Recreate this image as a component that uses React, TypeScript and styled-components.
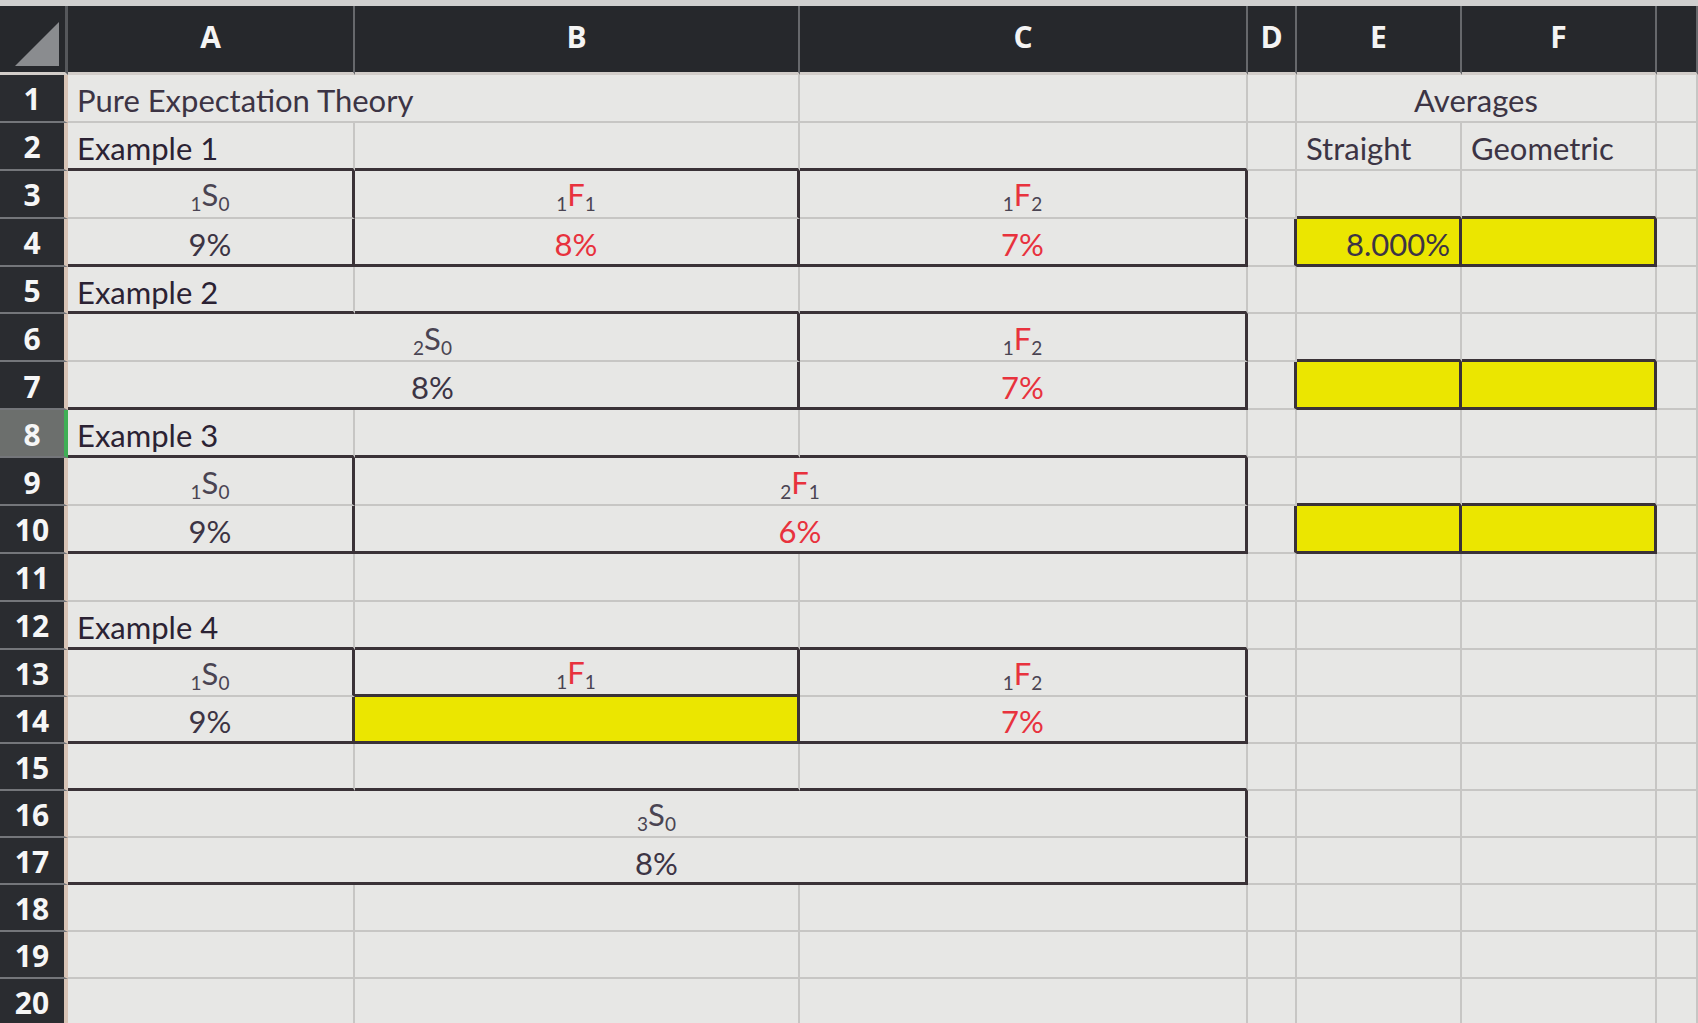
import React from "react";
import styled, { createGlobalStyle } from "styled-components";

type Align = "left" | "center" | "right";

interface CellDef {
  r: number;
  c: number;
  span?: number;
  align?: Align;
  fill?: boolean;
  red?: boolean;
  label?: boolean;
  content?: React.ReactNode;
}

const COL_WIDTHS = [287, 445, 448, 49, 165, 195];
const LETTERS = ["A", "B", "C", "D", "E", "F", ""];
const ROW_COUNT = 20;
const SELECTED_ROW = 8;

const GlobalStyle = createGlobalStyle`
  html, body {
    margin: 0;
    padding: 0;
    background: #e7e7e5;
    overflow: hidden;
  }
  body {
    font-family: Lato, "Open Sans", "Liberation Sans", sans-serif;
  }
`;

const Sheet = styled.div`
  display: grid;
  grid-template-columns: 68px ${COL_WIDTHS.map((w) => `${w}px`).join(" ")} 1fr;
  grid-template-rows: 69px repeat(12, 47.9px) repeat(8, 47.1px);
  width: 1698px;
  height: 1023px;
  overflow: hidden;
  border-top: 6px solid #cfcfcf;
  box-sizing: border-box;
  background: #e7e7e5;
`;

const Corner = styled.div`
  grid-row: 1;
  grid-column: 1;
  background: #26282c;
  border-bottom: 3px solid #d2cdc9;
  border-right: 3px solid #55575b;
  box-sizing: border-box;
  display: flex;
  align-items: flex-end;
  justify-content: flex-end;
  padding: 0 6px 6px 0;
`;

const ColHead = styled.div<{ $col: number }>`
  grid-row: 1;
  grid-column: ${({ $col }) => $col + 1};
  background: #26282c;
  color: #f4f4f4;
  font-family: "Open Sans", Lato, sans-serif;
  font-weight: 700;
  font-size: 30px;
  display: flex;
  align-items: center;
  justify-content: center;
  box-sizing: border-box;
  border-right: 2px solid #66686c;
  border-bottom: 3px solid #d2cdc9;
  padding-bottom: 6px;
`;

const RowHead = styled.div<{ $row: number; $selected: boolean }>`
  grid-row: ${({ $row }) => $row + 1};
  grid-column: 1;
  background: ${({ $selected }) => ($selected ? "#6c6f6d" : "#2a2c30")};
  color: #f6f6f6;
  font-family: "Open Sans", Lato, sans-serif;
  font-weight: 700;
  font-size: 30px;
  display: flex;
  align-items: center;
  justify-content: center;
  box-sizing: border-box;
  border-bottom: 2px solid #74767a;
  border-right: 4px solid ${({ $selected }) => ($selected ? "#3fae55" : "#d8c4b6")};
  padding-top: 2px;
`;

const Cell = styled.div<{
  $r: number;
  $c: number;
  $span: number;
  $align: Align;
  $fill: boolean;
  $red: boolean;
  $label: boolean;
  $darkRight: boolean;
  $darkBottom: boolean;
}>`
  grid-row: ${({ $r }) => $r + 1};
  grid-column: ${({ $c }) => $c + 1} / span ${({ $span }) => $span};
  box-sizing: border-box;
  min-width: 0;
  border-right: ${({ $darkRight }) => ($darkRight ? "3px solid #3a3237" : "2px solid #c7c6c4")};
  border-bottom: ${({ $darkBottom }) => ($darkBottom ? "3px solid #3a3237" : "2px solid #c7c6c4")};
  background: ${({ $fill }) => ($fill ? "#ebe600" : "#e7e7e5")};
  display: flex;
  align-items: center;
  justify-content: ${({ $align }) =>
    $align === "center" ? "center" : $align === "right" ? "flex-end" : "flex-start"};
  padding: 5px 9px 0;
  font-size: 31px;
  color: ${({ $red, $label }) => ($red ? "#e8323d" : $label ? "#2b2233" : "#3c3444")};
  white-space: nowrap;
  overflow: visible;
`;

const Sym = styled.span`
  display: inline-flex;
  align-items: baseline;
  margin-top: -4px;
`;

const Main = styled.span<{ $red: boolean }>`
  color: ${({ $red }) => ($red ? "#e8323d" : "#4a4452")};
  font-size: 31px;
`;

const Sub = styled.span`
  color: #4a4452;
  font-size: 19px;
  position: relative;
  top: 5px;
`;

const Term: React.FC<{ pre: string; main: string; post: string; red?: boolean }> = ({
  pre,
  main,
  post,
  red = false,
}) => (
  <Sym>
    <Sub>{pre}</Sub>
    <Main $red={red}>{main}</Main>
    <Sub>{post}</Sub>
  </Sym>
);

const defs: CellDef[] = [
  { r: 1, c: 1, span: 2, content: "Pure Expectation Theory" },
  { r: 1, c: 5, span: 2, align: "center", content: "Averages" },
  { r: 2, c: 1, label: true, content: "Example 1" },
  { r: 2, c: 5, content: "Straight" },
  { r: 2, c: 6, content: "Geometric" },

  { r: 3, c: 1, align: "center", content: <Term pre="1" main="S" post="0" /> },
  { r: 3, c: 2, align: "center", content: <Term pre="1" main="F" post="1" red /> },
  { r: 3, c: 3, align: "center", content: <Term pre="1" main="F" post="2" red /> },
  { r: 4, c: 1, align: "center", content: "9%" },
  { r: 4, c: 2, align: "center", red: true, content: "8%" },
  { r: 4, c: 3, align: "center", red: true, content: "7%" },
  { r: 4, c: 5, align: "right", fill: true, content: "8.000%" },
  { r: 4, c: 6, fill: true },

  { r: 5, c: 1, label: true, content: "Example 2" },
  { r: 6, c: 1, span: 2, align: "center", content: <Term pre="2" main="S" post="0" /> },
  { r: 6, c: 3, align: "center", content: <Term pre="1" main="F" post="2" red /> },
  { r: 7, c: 1, span: 2, align: "center", content: "8%" },
  { r: 7, c: 3, align: "center", red: true, content: "7%" },
  { r: 7, c: 5, fill: true },
  { r: 7, c: 6, fill: true },

  { r: 8, c: 1, label: true, content: "Example 3" },
  { r: 9, c: 1, align: "center", content: <Term pre="1" main="S" post="0" /> },
  { r: 9, c: 2, span: 2, align: "center", content: <Term pre="2" main="F" post="1" red /> },
  { r: 10, c: 1, align: "center", content: "9%" },
  { r: 10, c: 2, span: 2, align: "center", red: true, content: "6%" },
  { r: 10, c: 5, fill: true },
  { r: 10, c: 6, fill: true },

  { r: 12, c: 1, label: true, content: "Example 4" },
  { r: 13, c: 1, align: "center", content: <Term pre="1" main="S" post="0" /> },
  { r: 13, c: 2, align: "center", content: <Term pre="1" main="F" post="1" red /> },
  { r: 13, c: 3, align: "center", content: <Term pre="1" main="F" post="2" red /> },
  { r: 14, c: 1, align: "center", content: "9%" },
  { r: 14, c: 2, fill: true },
  { r: 14, c: 3, align: "center", red: true, content: "7%" },

  { r: 16, c: 1, span: 3, align: "center", content: <Term pre="3" main="S" post="0" /> },
  { r: 17, c: 1, span: 3, align: "center", content: "8%" },
];

// thick borders are drawn as the bottom / right edge of the neighbouring cell
const darkBottom = new Set<string>();
const darkRight = new Set<string>();

[2, 4, 5, 7, 8, 10, 12, 14, 15, 17].forEach((r) => [1, 2, 3].forEach((c) => darkBottom.add(`${r},${c}`)));
darkBottom.add("13,2");
[3, 4, 6, 7, 9, 10].forEach((r) => [5, 6].forEach((c) => darkBottom.add(`${r},${c}`)));

[3, 4, 13, 14].forEach((r) => [1, 2, 3].forEach((c) => darkRight.add(`${r},${c}`)));
[6, 7].forEach((r) => [1, 3].forEach((c) => darkRight.add(`${r},${c}`)));
[9, 10].forEach((r) => [1, 2].forEach((c) => darkRight.add(`${r},${c}`)));
[16, 17].forEach((r) => darkRight.add(`${r},1`));
[4, 7, 10].forEach((r) => [4, 5, 6].forEach((c) => darkRight.add(`${r},${c}`)));

const buildCells = (): CellDef[] => {
  const out: CellDef[] = [];
  for (let r = 1; r <= ROW_COUNT; r++) {
    let c = 1;
    while (c <= LETTERS.length) {
      const found = defs.find((d) => d.r === r && d.c === c);
      if (found) {
        out.push(found);
        c += found.span ?? 1;
      } else {
        out.push({ r, c });
        c += 1;
      }
    }
  }
  return out;
};

const CornerMark = () => (
  <svg width="44" height="44" viewBox="0 0 44 44">
    <polygon points="44,0 44,44 0,44" fill="#8a8c8f" />
  </svg>
);

const App: React.FC = () => {
  const cells = buildCells();
  return (
    <>
      <GlobalStyle />
      <Sheet>
        <Corner>
          <CornerMark />
        </Corner>
        {LETTERS.map((letter, i) => (
          <ColHead key={`h${i}`} $col={i + 1}>
            {letter}
          </ColHead>
        ))}
        {Array.from({ length: ROW_COUNT }, (_, i) => (
          <RowHead key={`r${i}`} $row={i + 1} $selected={i + 1 === SELECTED_ROW}>
            {i + 1}
          </RowHead>
        ))}
        {cells.map((cell) => (
          <Cell
            key={`${cell.r}-${cell.c}`}
            $r={cell.r}
            $c={cell.c}
            $span={cell.span ?? 1}
            $align={cell.align ?? "left"}
            $fill={!!cell.fill}
            $red={!!cell.red}
            $label={!!cell.label}
            $darkRight={darkRight.has(`${cell.r},${cell.c}`)}
            $darkBottom={darkBottom.has(`${cell.r},${cell.c}`)}
          >
            {cell.content}
          </Cell>
        ))}
      </Sheet>
    </>
  );
};

export default App;
